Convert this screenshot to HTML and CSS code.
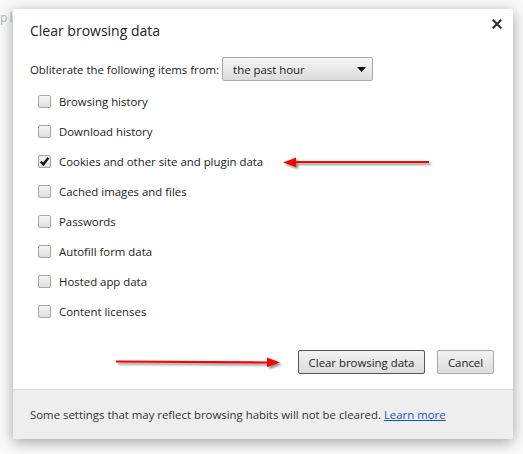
FILE: index.html
```html
<!DOCTYPE html>
<html lang="en">
<head>
<meta charset="utf-8">
<title>Clear browsing data</title>
<link rel="stylesheet" href="styles.css">
</head>
<body>
<div class="page-text">p l</div>
<div class="dialog">
  <div class="header">
    <h1 class="title">Clear browsing data</h1>
    <button class="close" aria-label="Close">
      <svg width="10" height="10" viewBox="0 0 10 10"><path d="M1.5 1.5 L8.5 8.5 M8.5 1.5 L1.5 8.5" stroke="#333" stroke-width="2.2" stroke-linecap="square"/></svg>
    </button>
  </div>
  <div class="content">
    <div class="from-row">
      <span>Obliterate the following items from:</span>
      <div class="select">
        <span>the past hour</span>
        <svg class="caret" width="9" height="5" viewBox="0 0 9 5"><path d="M0 0 H9 L4.5 5 Z" fill="#111"/></svg>
      </div>
    </div>
    <ul class="checklist">
      <li><span class="cb"></span>Browsing history</li>
      <li><span class="cb"></span>Download history</li>
      <li><span class="cb checked"><svg width="11" height="11" viewBox="0 0 11 11"><path d="M1.8 5.6 L4.3 8.4 L9.4 1.8" fill="none" stroke="#111" stroke-width="2.3"/></svg></span>Cookies and other site and plugin data</li>
      <li><span class="cb"></span>Cached images and files</li>
      <li><span class="cb"></span>Passwords</li>
      <li><span class="cb"></span>Autofill form data</li>
      <li><span class="cb"></span>Hosted app data</li>
      <li><span class="cb"></span>Content licenses</li>
    </ul>
  </div>
  <div class="actions">
    <button class="btn btn-default">Clear browsing data</button>
    <button class="btn btn-cancel">Cancel</button>
  </div>
  <div class="footer">
    <p class="footer-text">Some settings that may reflect browsing habits will not be cleared. <a href="#">Learn more</a></p>
  </div>
</div>
<svg class="arrow arrow-one" width="150" height="14" viewBox="0 0 150 14"><path d="M146 6 H12" stroke="#f00" stroke-width="2.2"/><path d="M0 6.5 L13 1.5 L13 11 Z" fill="#f00"/></svg>
<svg class="arrow arrow-two" width="170" height="14" viewBox="0 0 170 14"><path d="M2 5.5 L153 6.5" stroke="#f00" stroke-width="2.2"/><path d="M166 6.5 L153 1.5 L153 11 Z" fill="#f00"/></svg>
</body>
</html>
```
FILE: styles.css
```css
html, body {
  margin: 0;
  padding: 0;
}
body {
  width: 523px;
  height: 454px;
  background: #f9f9f9;
  font-family: "Open Sans", "Noto Sans", sans-serif;
  color: #222;
  position: relative;
  overflow: hidden;
}
.page-text {
  position: absolute;
  left: 0;
  top: 9px;
  font-size: 12px;
  word-spacing: -1px;
  color: #a9b8c8;
}
.dialog {
  position: absolute;
  left: 13px;
  top: 9px;
  width: 500px;
  height: 430px;
  background: #fff;
  border-radius: 2px;
  box-shadow: 0 3px 14px rgba(0, 0, 0, 0.35);
  display: flex;
  flex-direction: column;
}
.header {
  position: relative;
  padding: 12px 17px 0;
}
.title {
  margin: 0;
  font-size: 14px;
  font-weight: 400;
  line-height: 20px;
  color: #222;
}
.close {
  position: absolute;
  right: 9px;
  top: 8px;
  width: 14px;
  height: 14px;
  padding: 0;
  border: 0;
  background: none;
  display: flex;
  align-items: center;
  justify-content: center;
}
.content {
  padding: 16px 17px 0;
  font-size: 11.4px;
}
.from-row {
  display: flex;
  align-items: center;
  gap: 3px;
  height: 24px;
}
.select {
  width: 133px;
  height: 22px;
  border: 1px solid #aaa;
  border-radius: 2px;
  background: linear-gradient(#f5f5f5, #dcdcdc);
  display: flex;
  align-items: center;
  justify-content: space-between;
  padding: 0 6px 0 10px;
}
.checklist {
  list-style: none;
  margin: 5px 0 0;
  padding: 0 0 0 8px;
}
.checklist li {
  height: 30px;
  display: flex;
  align-items: center;
  gap: 8px;
}
.cb {
  width: 11px;
  height: 11px;
  border: 1px solid #a6a6a6;
  border-radius: 2px;
  background: linear-gradient(#f6f6f6, #dedede);
  display: flex;
  align-items: center;
  justify-content: center;
}
.actions {
  display: flex;
  justify-content: flex-end;
  gap: 12px;
  padding: 24px 19px 0;
}
.btn {
  height: 24px;
  font-family: inherit;
  font-size: 11.4px;
  color: #222;
  border: 1px solid #a8a8a8;
  border-radius: 2px;
  background: linear-gradient(#f2f2f2, #dcdcdc);
  padding: 0;
  white-space: nowrap;
}
.btn-default {
  width: 127px;
  border-color: #555;
}
.btn-cancel {
  width: 57px;
}
.footer {
  margin-top: auto;
  height: 49px;
  border-top: 1px solid #dcdcdc;
  background: #eee;
  border-radius: 0 0 2px 2px;
  display: flex;
  align-items: center;
  padding: 0 17px;
}
.footer-text {
  margin: 0;
  font-size: 11.4px;
  color: #333;
}
.footer-text a {
  color: #1a4fc8;
}
.arrow {
  position: absolute;
  filter: drop-shadow(2px 2px 1px rgba(0, 0, 0, 0.45));
}
.arrow-one {
  left: 283px;
  top: 156px;
}
.arrow-two {
  left: 114px;
  top: 356px;
}
```
